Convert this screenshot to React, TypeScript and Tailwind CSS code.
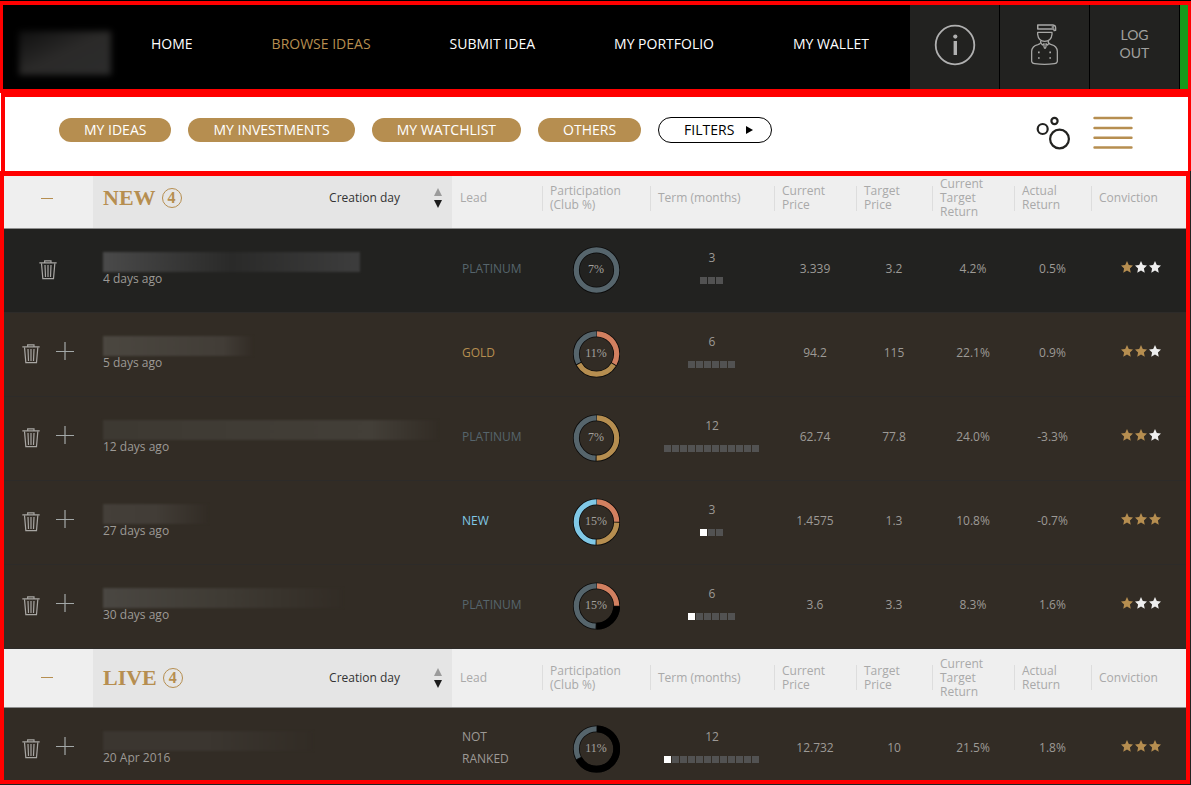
import React from "react";

const GOLD = "#b68e50";
const SLATE = "#56656c";
const CORAL = "#d28060";
const BLUE = "#80c8e6";
const BLACK = "#000000";

type Slice = { color: string; share: number };

type Idea = {
  id: string;
  age: string;
  lead: string;
  leadClass: string;
  percent: string;
  slices: Slice[];
  term: number;
  elapsed: number;
  values: string[];
  stars: number;
  owned?: boolean;
  smudge: string;
};

const NEW_IDEAS: Idea[] = [
  {
    id: "n1",
    age: "4 days ago",
    lead: "PLATINUM",
    leadClass: "text-[#56656c]",
    percent: "7%",
    slices: [{ color: SLATE, share: 1 }],
    term: 3,
    elapsed: 0,
    values: ["3.339", "3.2", "4.2%", "0.5%"],
    stars: 1,
    owned: true,
    smudge: "w-[257px] from-[#4a4a4a] via-[#2a2a29] to-[#3d3d3d]",
  },
  {
    id: "n2",
    age: "5 days ago",
    lead: "GOLD",
    leadClass: "text-[#b68e50]",
    percent: "11%",
    slices: [
      { color: CORAL, share: 1 / 3 },
      { color: GOLD, share: 1 / 3 },
      { color: SLATE, share: 1 / 3 },
    ],
    term: 6,
    elapsed: 0,
    values: ["94.2", "115", "22.1%", "0.9%"],
    stars: 2,
    smudge: "w-[150px] from-[#4b4740] via-[#423d37] via-80% to-[#322c25]",
  },
  {
    id: "n3",
    age: "12 days ago",
    lead: "PLATINUM",
    leadClass: "text-[#56656c]",
    percent: "7%",
    slices: [
      { color: GOLD, share: 0.5 },
      { color: SLATE, share: 0.5 },
    ],
    term: 12,
    elapsed: 0,
    values: ["62.74", "77.8", "24.0%", "-3.3%"],
    stars: 2,
    smudge: "w-[335px] from-[#3d3932] via-[#433f38] via-80% to-[#322c25]",
  },
  {
    id: "n4",
    age: "27 days ago",
    lead: "NEW",
    leadClass: "text-[#80c8e6]",
    percent: "15%",
    slices: [
      { color: CORAL, share: 0.25 },
      { color: GOLD, share: 0.25 },
      { color: BLUE, share: 0.5 },
    ],
    term: 3,
    elapsed: 1,
    values: ["1.4575", "1.3", "10.8%", "-0.7%"],
    stars: 3,
    smudge: "w-[105px] from-[#443f39] via-[#423d37] to-[#322c25]",
  },
  {
    id: "n5",
    age: "30 days ago",
    lead: "PLATINUM",
    leadClass: "text-[#56656c]",
    percent: "15%",
    slices: [
      { color: CORAL, share: 0.25 },
      { color: BLACK, share: 0.25 },
      { color: SLATE, share: 0.5 },
    ],
    term: 6,
    elapsed: 1,
    values: ["3.6", "3.3", "8.3%", "1.6%"],
    stars: 1,
    smudge: "w-[240px] from-[#4a4742] via-[#3f3b34] to-[#322c25]",
  },
];

const LIVE_IDEAS: Idea[] = [
  {
    id: "l1",
    age: "20 Apr 2016",
    lead: "NOT RANKED",
    leadClass: "text-[#9d9a96]",
    percent: "11%",
    slices: [
      { color: BLACK, share: 2 / 3 },
      { color: SLATE, share: 1 / 3 },
    ],
    term: 12,
    elapsed: 1,
    values: ["12.732", "10", "21.5%", "1.8%"],
    stars: 3,
    smudge: "w-[210px] from-[#3b3630] via-[#3b3630] to-[#322c25]",
  },
];

const NAV = ["HOME", "BROWSE IDEAS", "SUBMIT IDEA", "MY PORTFOLIO", "MY WALLET"];
const PILLS = ["MY IDEAS", "MY INVESTMENTS", "MY WATCHLIST", "OTHERS"];
const COLUMNS = [
  "Participation (Club\u00a0%)",
  "Term\u00a0(months)",
  "Current Price",
  "Target Price",
  "Current Target Return",
  "Actual Return",
  "Conviction",
];

function InfoIcon() {
  return (
    <svg viewBox="0 0 42 42" className="size-[42px]" fill="none" stroke="#b0b0b0" aria-hidden="true">
      <circle cx="21" cy="21" r="19.3" strokeWidth="1.8" />
      <circle cx="21.3" cy="12.600" r="2.1" fill="#b0b0b0" stroke="none" />
      <path d="M21.300 17v14" strokeWidth="3.4" />
    </svg>
  );
}

function ChefIcon() {
  return (
    <svg viewBox="420 70 90 129" className="h-[43px] w-[30px]" fill="none" stroke="#a8a8a6" strokeWidth="3.8" strokeLinejoin="round" aria-hidden="true">
      <path d="M443 76h46q8 1 8 9v7l-5 1v-5h-49z" />
      <path d="M443 88v-12M485 82h7" />
      <path d="M443 98h43v6q-2 20-22 21q-19-1-21-21z" />
      <path d="M452 124v5q-1 4-8 6q-18 4-19 20v30q1 6 9 7q30 4 59 0q8-1 9-7v-30q-1-16-18-20q-8-2-9-6v-5" />
      <path d="M452 129l5 7l5-4v9q1 5 3 5q2 0 3-5v-9l5 4l5-7" />
      <path d="M444 158h5M478 158h5M444 175h5M478 175h5" strokeWidth="5" />
    </svg>
  );
}

function BubblesIcon() {
  return (
    <svg viewBox="0 0 35 34" className="h-[34px] w-[35px]" fill="none" stroke="#222220" strokeWidth="2.2" aria-hidden="true">
      <circle cx="18.5" cy="5" r="3.1" />
      <circle cx="6.7" cy="13" r="5" />
      <circle cx="23.5" cy="23" r="9.4" />
    </svg>
  );
}

function ListIcon() {
  return (
    <svg viewBox="0 0 40 34" className="h-[34px] w-[40px]" stroke={GOLD} strokeWidth="2.4" strokeLinecap="round" aria-hidden="true">
      <path d="M1.5 2h37M1.5 12h37M1.5 21.7h37M1.5 31.5h37" />
    </svg>
  );
}

function TrashIcon() {
  return (
    <svg viewBox="66 538 54 60" className="h-[20px] w-[18px]" fill="none" stroke="#a8a6a3" strokeWidth="3.6" aria-hidden="true">
      <path d="M67 546.500h52M83 545v-4.500h19v4.500" />
      <path d="M73.500 548l4 46h32l4-46" />
      <path d="M84 553l1.500 36M93 553v36M102 553l-1.500 36" />
    </svg>
  );
}

function PlusIcon() {
  return (
    <svg viewBox="0 0 18 18" className="size-[18px]" stroke="#a3a8a8" strokeWidth="1.2" aria-hidden="true">
      <path d="M0 9.500h18M9 0v18" />
    </svg>
  );
}

function Star({ filled }: { filled: boolean }) {
  return (
    <svg viewBox="0 0 24 24" className="size-3" fill={filled ? GOLD : "#eeeeee"} aria-hidden="true">
      <path d="M12 0l3.600 7.900 8.400 1-6.200 5.900 1.700 8.700L12 19.200l-7.500 4.300 1.700-8.700L0 8.900l8.400-1z" />
    </svg>
  );
}

function Ring({ slices, label }: { slices: Slice[]; label: string }) {
  const r = 20.2;
  const length = 2 * Math.PI * r;
  let start = 0;
  const arcs = slices.map((s) => {
    const from = start;
    start += s.share;
    return { ...s, from };
  });
  return (
    <svg viewBox="0 0 48 48" className="mx-auto size-12" role="img" aria-label={label}>
      <circle cx="24.5" cy="24" r={r} fill="none" stroke="#0b0b0b" strokeWidth="6.8" />
      <g transform="rotate(-90 24.5 24)">
        {arcs.map((a) => (
          <circle
            key={a.from}
            cx="24.5"
            cy="24"
            r={r}
            fill="none"
            stroke={a.color}
            strokeWidth={a.color === BLACK ? 6.8 : 5.2}
            strokeDasharray={`${a.share * length - (slices.length > 1 ? 1 : 0)} ${length}`}
            strokeDashoffset={-(a.from * length + (slices.length > 1 ? 0.5 : 0))}
          />
        ))}
      </g>
      <text x="24" y="27" textAnchor="middle" className="fill-[#a3a19e] font-['Liberation_Serif',serif] text-[12px]">
        {label}
      </text>
    </svg>
  );
}

function GroupHead({ title }: { title: string }) {
  return (
    <tr className="h-[59px] border-b border-[#8f8f8f] bg-[#efefef] text-left leading-[14px] text-[#a9a9a9]">
      <th className="p-0 pr-1">
        <button type="button" aria-label={`Collapse ${title}`} className="mx-auto flex h-6 w-8 items-center justify-center">
          <span className="h-px w-3 bg-[#b68e50]" />
        </button>
      </th>
      <th className="bg-[#e5e5e5] p-0 pr-[10px] pl-[10px] font-normal">
        <div className="flex items-center">
          <h2 className="font-['Liberation_Serif',serif] text-[22px] leading-6 font-bold text-[#b68e50]">{title}</h2>
          <span className="ml-1.5 flex size-5 items-center justify-center rounded-full border border-[#b68e50] font-['Liberation_Serif',serif] text-[16px] font-bold text-[#b68e50]">
            4
          </span>
          <button type="button" className="ml-auto flex items-center gap-[34px] text-[#333333]">
            Creation day
            <svg viewBox="0 0 8 20" className="h-5 w-2" aria-hidden="true">
              <path d="M4 0l4 8H0z" fill="#9b9b9b" />
              <path d="M4 20l4-8H0z" fill="#1c1c1c" />
            </svg>
          </button>
        </div>
      </th>
      <th className="p-0 pl-2 font-normal">Lead</th>
      {COLUMNS.map((label) => (
        <th key={label} className="p-0 font-normal">
          <div className="flex h-[25px] items-center border-l border-[#dddddd] pl-[7px]">
            <span className="w-min">{label}</span>
          </div>
        </th>
      ))}
    </tr>
  );
}

function IdeaRow({ idea }: { idea: Idea }) {
  return (
    <tr className={`h-[84px] border-b border-[#2d2b29] text-center text-[#9d9a96] ${idea.owned ? "bg-[#222220]" : "bg-[#322c25]"}`}>
      <td className="p-0 pr-0.5">
        <div className="flex items-center justify-center gap-4">
          <button type="button" aria-label="Delete idea">
            <TrashIcon />
          </button>
          {!idea.owned && (
            <button type="button" aria-label="Add idea" className="pb-1.5">
              <PlusIcon />
            </button>
          )}
        </div>
      </td>
      <td className="p-0 pb-[2px] pl-[10px] text-left">
        <div className={`h-5 bg-linear-to-r blur-[1px] ${idea.smudge}`} />
        <div className="leading-[14px]">{idea.age}</div>
      </td>
      <td className={`p-0 pr-5 pb-[3px] pl-[10px] text-left leading-[22px] font-medium ${idea.leadClass}`}>{idea.lead}</td>
      <td className="p-0">
        <Ring slices={idea.slices} label={idea.percent} />
      </td>
      <td className="p-0 pb-[7px]">
        <div className="leading-[16px]">{idea.term}</div>
        <div className="mt-[11px] flex justify-center gap-px pr-0.5">
          {Array.from({ length: idea.term }, (_, i) => (
            <span key={i} className={`size-[7px] ${i < idea.elapsed ? "bg-white" : "bg-[#525252]"}`} />
          ))}
        </div>
      </td>
      {idea.values.map((value, i) => (
        <td key={i} className="p-0 pb-[3px]">
          {value}
        </td>
      ))}
      <td className="p-0 pb-[6px] pl-[30px]">
        <div className="flex gap-0.5" role="img" aria-label={`${idea.stars} of 3 stars`}>
          {[0, 1, 2].map((i) => (
            <Star key={i} filled={i < idea.stars} />
          ))}
        </div>
      </td>
    </tr>
  );
}

export default function App() {
  return (
    <div className="flex h-screen flex-col bg-[#222220] font-['Open_Sans',sans-serif]">
      <div className="bg-black pt-px">
        <header className="overflow-hidden border-x-[3px] border-y-4 border-[#ff0000] bg-black">
          <div className="-mt-[5px] flex h-[89px] items-stretch">
            <div className="flex w-[148px] items-center pt-4 pl-4">
              <div className="h-[44px] w-[92px] bg-linear-to-br from-[#101010] via-[#2b2a29] to-[#2c2c2c] blur-[3px]" />
            </div>
            <nav className="flex flex-1 items-center gap-[79px] pb-0.5 text-[14px] font-medium whitespace-nowrap text-white">
              {NAV.map((item) => (
                <a key={item} href="#" className={item === "BROWSE IDEAS" ? "text-[#b68e50]" : ""}>
                  {item}
                </a>
              ))}
            </nav>
            <div className="flex gap-px">
              <button type="button" aria-label="Information" className="flex w-[89px] items-center justify-center bg-[#222220]">
                <InfoIcon />
              </button>
              <button type="button" aria-label="Profile" className="flex w-[89px] items-center justify-center bg-[#222220]">
                <ChefIcon />
              </button>
              <a href="#" className="flex w-[89px] items-center justify-center bg-[#222220] pb-0.5 text-center font-['Lato',sans-serif] text-[14px] leading-[18px] text-[#a0a09e]">
                LOG
                <br />
                OUT
              </a>
              <div className="w-2 bg-[#159a1b]" />
            </div>
          </div>
        </header>
      </div>

      <div className="bg-white pl-px">
        <section className="flex h-[78px] items-center justify-between border-t-4 border-r-[3px] border-l-4 border-[#ff0000] bg-white pr-[55px] pl-[54px]">
          <div className="flex items-center gap-[17px] pb-2 text-[14px] whitespace-nowrap">
            {PILLS.map((pill) => (
              <button key={pill} type="button" className="h-6 rounded-full bg-[#b68e50] px-[25px] leading-[22px] text-white">
                {pill}
              </button>
            ))}
            <button type="button" className="flex h-[26px] items-center gap-3 rounded-full border border-black pr-[18px] pl-[25px] leading-[22px] text-black">
              FILTERS
              <svg viewBox="0 0 7 8" className="h-2 w-[7px]" aria-hidden="true">
                <path d="M0 0l7 4-7 4z" />
              </svg>
            </button>
          </div>
          <div className="flex items-center gap-[22px] pb-0.5">
            <button type="button" aria-label="Bubble view">
              <BubblesIcon />
            </button>
            <button type="button" aria-label="List view">
              <ListIcon />
            </button>
          </div>
        </section>
      </div>

      <main className="mr-px mb-px min-h-0 flex-1 overflow-hidden border-x-4 border-t-[5px] border-b-4 border-[#ff0000] bg-[#322c25]">
        <table className="-mt-[7px] w-full table-fixed border-collapse text-[12px]">
          <colgroup>
            <col className="w-[89px]" />
            <col />
            <col className="w-[90px]" />
            <col className="w-[108px]" />
            <col className="w-[124px]" />
            <col className="w-[82px]" />
            <col className="w-[76px]" />
            <col className="w-[82px]" />
            <col className="w-[77px]" />
            <col className="w-[95px]" />
          </colgroup>
          <tbody>
            <GroupHead title="NEW" />
            {NEW_IDEAS.map((idea) => (
              <IdeaRow key={idea.id} idea={idea} />
            ))}
          </tbody>
          <tbody>
            <GroupHead title="LIVE" />
            {LIVE_IDEAS.map((idea) => (
              <IdeaRow key={idea.id} idea={idea} />
            ))}
          </tbody>
        </table>
      </main>
    </div>
  );
}
